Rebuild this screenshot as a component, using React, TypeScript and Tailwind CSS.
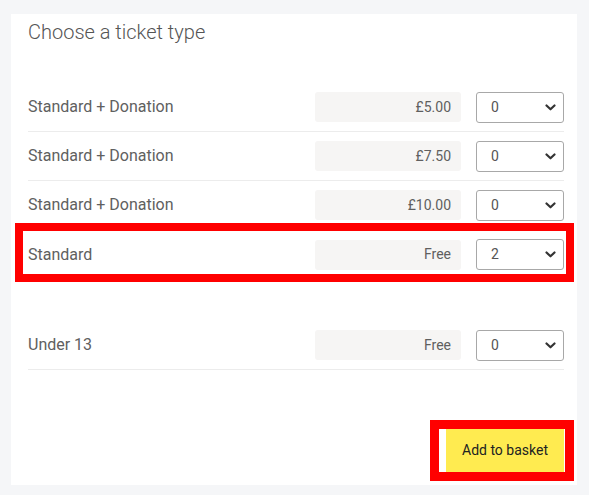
import React from "react";

type Row = { label: string; price: string; qty: string; highlight?: boolean };

const rows: Row[] = [
  { label: "Standard + Donation", price: "£5.00", qty: "0" },
  { label: "Standard + Donation", price: "£7.50", qty: "0" },
  { label: "Standard + Donation", price: "£10.00", qty: "0" },
  { label: "Standard", price: "Free", qty: "2", highlight: true },
];

function Chevron() {
  return (
    <svg width="11" height="7" viewBox="0 0 11 7" className="shrink-0">
      <path d="M1.5 1.5 L5.5 5.3 L9.5 1.5" fill="none" stroke="#333" strokeWidth="2.2" strokeLinecap="round" strokeLinejoin="round" />
    </svg>
  );
}

function TicketRow({ row, border = true }: { row: Row; border?: boolean }) {
  return (
    <div className={`relative flex h-[49px] items-center ${border ? "border-b border-[#ececec]" : ""}`}>
      <div className="flex-1 text-[16px] text-[#606060]">{row.label}</div>
      <div className="flex h-[30px] w-[146px] items-center justify-end rounded-[3px] bg-[#f6f5f4] pr-[10px] text-[14px] text-[#5f5f5f]">
        {row.price}
      </div>
      <div className="ml-[15px] flex h-[31px] w-[88px] items-center justify-between rounded-[3px] border border-[#a8a8a8] bg-white pl-[14px] pr-[7px] text-[14px] text-[#555]">
        <span>{row.qty}</span>
        <Chevron />
      </div>
      {row.highlight && (
        <div className="pointer-events-none absolute left-[-13px] right-[-10px] top-[-7px] bottom-[-3px] border-[8px] border-[#ff0000]" />
      )}
    </div>
  );
}

export default function App() {
  return (
    <div
      className="h-[495px] w-[589px] bg-[#f5f6f8] pl-[11px] pr-[12px] pt-[14px]"
      style={{ fontFamily: "Roboto, 'Noto Sans', sans-serif" }}
    >
      <div className="flex h-[471px] flex-col bg-white pl-[17px] pr-[13px]">
        <div className="pt-[5px] text-[20px] font-light leading-[26px] text-[#555]">Choose a ticket type</div>
        <div className="mt-[38px]">
          {rows.map((r, i) => (
            <TicketRow key={i} row={r} border={!r.highlight} />
          ))}
          <div className="h-[42px]" />
          <TicketRow row={{ label: "Under 13", price: "Free", qty: "0" }} />
        </div>
        <div className="mt-auto mb-[13px] flex justify-end">
          <div className="relative">
            <button className="h-[43px] w-[118px] bg-[#ffeb50] text-[14px] text-[#222]">Add to basket</button>
            <div className="pointer-events-none absolute left-[-16px] right-[-10px] top-[-9px] bottom-[-9px] border-[9px] border-[#ff0000]" />
          </div>
        </div>
      </div>
    </div>
  );
}
